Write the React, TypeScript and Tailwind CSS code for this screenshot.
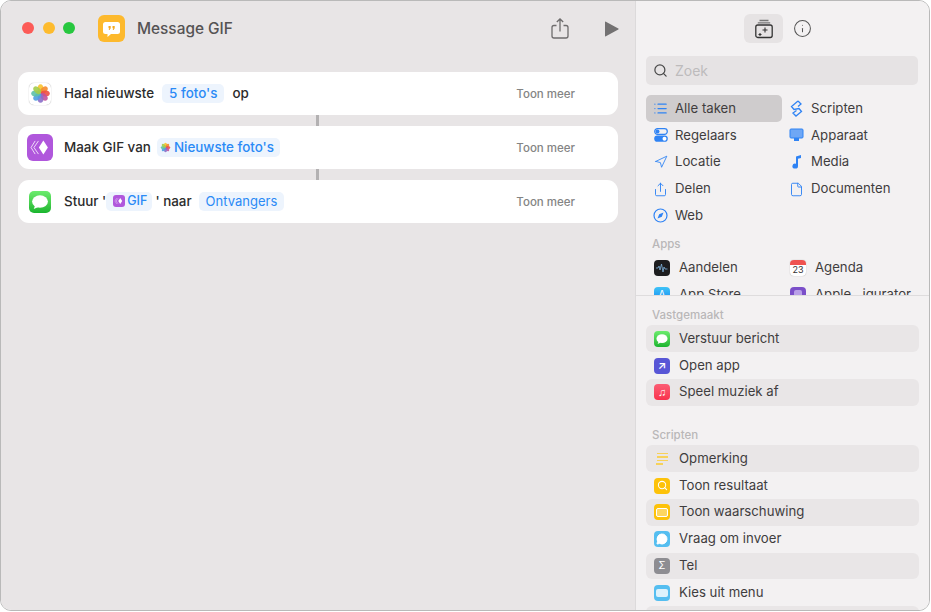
import type { ReactNode } from 'react';
import { File, Info, List, MessageCircle, Navigation, Search, Share } from 'lucide-react';

const petals = ['#f9c32d', '#f58b2c', '#ee4f45', '#c2529c', '#8a6fc9', '#4f9de0', '#5cc0a8', '#a3cc4a'];

function Flower({ size }: { size: number }) {
  return (
    <svg width={size} height={size} viewBox="0 0 24 24">
      {petals.map((color, i) => (
        <ellipse key={color} cx="12" cy="6.6" rx="3.3" ry="5.2" fill={color} opacity="0.9" transform={`rotate(${i * 45} 12 12)`} />
      ))}
    </svg>
  );
}

function GifGlyph({ size }: { size: number }) {
  return (
    <svg width={size} height={size} viewBox="0 0 28 28" fill="none">
      <path d="M17.5 5.5 23 14l-5.5 8.5L12 14z" fill="#fff" />
      <path d="M11.5 6 6 14l5.5 8M7.5 6 2.5 14l5 8" stroke="#fff" strokeWidth="1.2" opacity="0.8" />
    </svg>
  );
}

function BubbleGlyph({ size }: { size: number }) {
  return (
    <svg width={size} height={size} viewBox="0 0 24 24">
      <ellipse cx="12" cy="11.5" rx="9.5" ry="7.5" fill="#fff" />
      <path d="M6 16.5 4.5 20.5 10 18z" fill="#fff" />
    </svg>
  );
}

function Token({ children, className = '' }: { children: ReactNode; className?: string }) {
  return (
    <span className={`flex h-[19px] items-center rounded-[5px] bg-[#edf4fd] font-medium text-[#2a8af6] ${className}`}>
      {children}
    </span>
  );
}

function ActionCard({ icon, children }: { icon: ReactNode; children: ReactNode }) {
  return (
    <div className="flex h-[43px] w-[600px] items-center rounded-[11px] bg-white pr-[43px] pl-[9px]">
      <div className="flex w-[26px] justify-center">{icon}</div>
      <div className="ml-[11px] flex flex-1 items-center text-[13.4px] font-medium text-[#2b2b2b]">{children}</div>
      <span className="pt-[2px] text-[11.5px] font-medium text-[#848484]">Toon meer</span>
    </div>
  );
}

function Connector() {
  return <div className="ml-[298px] h-[11px] w-[3px] bg-[#b3b1b2]" />;
}

function Category({ icon, label, active }: { icon: ReactNode; label: string; active?: boolean }) {
  return (
    <div className={`flex h-[26.8px] items-center rounded-[5px] pl-[6px] text-[13.2px] text-[#3f3d3e] ${active ? 'bg-[#cfcccd]' : ''}`}>
      <span className="flex w-[17px] justify-center text-[#2f83f4]">{icon}</span>
      <span className="ml-[6px]">{label}</span>
    </div>
  );
}

function AppIcon({ className, children }: { className: string; children?: ReactNode }) {
  return <span className={`flex h-4 w-4 items-center justify-center overflow-hidden rounded-[4px] ${className}`}>{children}</span>;
}

function Suggestion({ icon, label, shaded }: { icon: ReactNode; label: string; shaded?: boolean }) {
  return (
    <div className={`flex h-[26.8px] items-center rounded-[6px] pl-[8px] text-[13.2px] text-[#3f3d3e] ${shaded ? 'bg-[#e9e6e7]' : ''}`}>
      {icon}
      <span className="ml-[9px] whitespace-nowrap">{label}</span>
    </div>
  );
}

function SectionLabel({ children, className = '' }: { children: ReactNode; className?: string }) {
  return <div className={`pl-[6px] text-[11.5px] font-medium text-[#b9b7b8] ${className}`}>{children}</div>;
}

export default function App() {
  return (
    <div className="h-[612px] w-[931px] bg-white font-['Inter','Liberation_Sans',sans-serif]">
      <div className="flex h-[611px] w-[930px] overflow-hidden rounded-[11px] border border-[#b9b9b9]">
        <main className="h-full w-[635px] border-r border-[#dcdadb] bg-[#e8e5e6] pl-[17px]">
          <header className="flex h-[71px] items-start">
            <div className="mt-[21px] ml-[4px] flex gap-[8.5px]">
              <span className="h-3 w-3 rounded-full bg-[#fc5b57]" />
              <span className="h-3 w-3 rounded-full bg-[#fdbb2e]" />
              <span className="h-3 w-3 rounded-full bg-[#27c73f]" />
            </div>
            <div className="mt-[14px] ml-[23px] flex h-[27px] w-[27px] items-center justify-center rounded-[6px] bg-[#fdb92d]">
              <svg width="19" height="18" viewBox="0 0 19 18">
                <path d="M3.5 2h12A2.5 2.5 0 0 1 18 4.5v7a2.5 2.5 0 0 1-2.5 2.5H9l-3.5 3v-3h-2A2.5 2.5 0 0 1 1 11.5v-7A2.5 2.5 0 0 1 3.5 2z" fill="#fff" />
                <path d="M6.5 6h2.2v2.2L7.6 10H6.7l.6-1.7h-.8zM10.5 6h2.2v2.2L11.6 10h-.9l.6-1.7h-.8z" fill="#f4a91f" />
              </svg>
            </div>
            <h1 className="mt-[18px] ml-[12px] w-[96px] text-[15.4px] leading-[20px] font-medium whitespace-nowrap text-[#555354]">Message GIF</h1>
            <svg className="mt-[17px] ml-[318px]" width="18" height="21" viewBox="0 0 18 21" fill="none" stroke="#6e6c6d" strokeWidth="1.3">
              <path d="M5.5 7.5H3a2 2 0 0 0-2 2V18a2 2 0 0 0 2 2h12a2 2 0 0 0 2-2V9.5a2 2 0 0 0-2-2h-2.5" />
              <path d="M9 13.5V1M5.8 4 9 1l3.200 3" />
            </svg>
            <svg className="mt-[20px] ml-[35px]" width="15" height="16" viewBox="0 0 15 16" fill="#737172">
              <path d="M1 1.2v13.6a.6.6 0 0 0 .9.5l12.400-6.800a.6.6 0 0 0 0-1L1.900.7a.6.6 0 0 0-.9.5z" />
            </svg>
          </header>
          <ActionCard
            icon={
              <span className="flex h-[22px] w-[22px] items-center justify-center rounded-[5px] bg-white shadow-[0_0_1px_#999]">
                <Flower size={21} />
              </span>
            }
          >
            <span>Haal nieuwste</span>
            <Token className="ml-[8px] px-[7px]">5 foto's</Token>
            <span className="ml-[8px]">op</span>
          </ActionCard>
          <Connector />
          <ActionCard
            icon={
              <span className="flex h-[27px] w-[27px] items-center justify-center rounded-[6px] bg-[#b057dc]">
                <GifGlyph size={23} />
              </span>
            }
          >
            <span>Maak GIF van</span>
            <Token className="ml-[6px] gap-[3px] pr-[6px] pl-[3px]">
              <Flower size={11} />
              Nieuwste foto's
            </Token>
          </ActionCard>
          <Connector />
          <ActionCard
            icon={
              <span className="flex h-[22px] w-[22px] items-center justify-center rounded-[5px] bg-gradient-to-b from-[#6bec6e] to-[#17b52e]">
                <BubbleGlyph size={20} />
              </span>
            }
          >
            <span>Stuur '</span>
            <Token className="gap-[2px] pr-[5px] pl-[7px] text-[12.5px]">
              <span className="flex h-3 w-3 items-center justify-center rounded-[3px] bg-[#b057dc]">
                <GifGlyph size={10} />
              </span>
              GIF
            </Token>
            <span className="ml-[3px]">' naar</span>
            <span className="ml-[7px] flex h-[19px] items-center rounded-[5px] bg-[#edf4fd] px-[7px] text-[13px] font-normal text-[#2a8af6]">Ontvangers</span>
          </ActionCard>
        </main>
        <aside className="h-full flex-1 bg-[#f3f1f2]">
          <div className="flex h-[295px] flex-col overflow-hidden border-b border-[#dedcdd] px-[10px]">
            <div className="mt-[13px] flex h-[29px] shrink-0 items-center pl-[98px]">
              <span className="flex h-[29px] w-[39px] items-center justify-center rounded-[6px] bg-[#e6e3e4]">
                <svg width="20" height="20" viewBox="0 0 20 20" fill="none" stroke="#333" strokeWidth="1.3">
                  <path d="M5.5 1.5h9M3.8 3.8h12.4" stroke="#777" />
                  <rect x="1.8" y="6" width="16.4" height="12.5" rx="2" />
                  <path d="M11 8.5v5M8.5 11h5M6 14v3M4.5 15.5h3" strokeWidth="1.1" />
                </svg>
              </span>
              <Info className="ml-[10px] text-[#555]" size={19} strokeWidth={1.3} />
            </div>
            <div className="mt-[13px] flex h-[29px] w-[272px] shrink-0 items-center rounded-[5px] bg-[#e6e3e4] pl-[7px] text-[14px] text-[#bdbbbc]">
              <Search className="text-[#4a4a4a]" size={15} strokeWidth={2} />
              <span className="ml-[7px]">Zoek</span>
            </div>
            <div className="mt-[10.3px] grid shrink-0 grid-cols-[136px_1fr]">
              <Category active icon={<List size={15} />} label="Alle taken" />
              <Category
                icon={
                  <svg width="15" height="17" viewBox="0 0 15 17" fill="none" stroke="currentColor" strokeWidth="1.3">
                    <path d="M9 1 2.5 6.5 5 9.5l5-1 2.5 3-5.5 4.5-3-3 3.5-2.5M9 1l3 3-3 2.5" />
                  </svg>
                }
                label="Scripten"
              />
              <Category
                icon={
                  <svg width="14" height="14" viewBox="0 0 14 14">
                    <rect x="0.7" y="0.7" width="12.6" height="5.6" rx="2.8" fill="none" stroke="currentColor" strokeWidth="1.2" />
                    <circle cx="3.5" cy="3.5" r="2" fill="currentColor" />
                    <rect x="0.2" y="7.6" width="13.6" height="6.2" rx="3.1" fill="currentColor" />
                    <circle cx="10.5" cy="10.7" r="2" fill="#fff" />
                  </svg>
                }
                label="Regelaars"
              />
              <Category
                icon={
                  <svg width="15" height="14" viewBox="0 0 15 14" fill="currentColor">
                    <rect x="1" y="1" width="13" height="9" rx="1" fill="#6fa7f5" stroke="#2f83f4" />
                    <rect x="5" y="10" width="5" height="3" />
                  </svg>
                }
                label="Apparaat"
              />
              <Category icon={<Navigation size={14} strokeWidth={1.5} />} label="Locatie" />
              <Category
                icon={
                  <svg width="12" height="15" viewBox="0 0 12 15" fill="currentColor">
                    <path d="M5 1.5 10 0v3L7 3.8V11a2.8 2.5 0 1 1-2-2.3z" />
                  </svg>
                }
                label="Media"
              />
              <Category icon={<Share size={15} strokeWidth={1.5} />} label="Delen" />
              <Category icon={<File className="text-[#2f83f4]" size={15} strokeWidth={1.5} />} label="Documenten" />
              <Category
                icon={
                  <svg width="15" height="15" viewBox="0 0 15 15" fill="none" stroke="currentColor" strokeWidth="1.2">
                    <circle cx="7.5" cy="7.5" r="6.5" />
                    <path d="M10.5 4.5 8.8 8.8 4.5 10.5l1.7-4.3z" fill="currentColor" stroke="none" />
                  </svg>
                }
                label="Web"
              />
            </div>
            <SectionLabel className="mt-[8px] shrink-0 leading-[14px]">Apps</SectionLabel>
            <div className="mt-[3.5px] grid shrink-0 grid-cols-[136px_1fr]">
              <Suggestion
                icon={
                  <AppIcon className="bg-[#1d1d1f]">
                    <svg width="14" height="12" viewBox="0 0 14 12" fill="none" stroke="#7fb2dd" strokeWidth="0.8">
                      <path d="M1 6h2l1-2 1 4 1.5-6 1.5 8 1-5 1 2h2.5" />
                    </svg>
                  </AppIcon>
                }
                label="Aandelen"
              />
              <Suggestion
                icon={
                  <AppIcon className="bg-white shadow-[0_0_1px_#999]">
                    <span className="flex h-full w-full flex-col items-center text-[9px] leading-none text-[#333]">
                      <span className="h-[5px] w-full shrink-0 bg-[#ef5350]" />
                      23
                    </span>
                  </AppIcon>
                }
                label="Agenda"
              />
              <Suggestion icon={<AppIcon className="bg-gradient-to-b from-[#3fc3f7] to-[#1680ee] text-[10px] text-white">A</AppIcon>} label="App Store" />
              <Suggestion
                icon={
                  <AppIcon className="bg-[#7b4fc9]">
                    <span className="h-[10px] w-[8px] rounded-[2px] bg-[#b9a0e8]" />
                  </AppIcon>
                }
                label="Apple…igurator"
              />
            </div>
          </div>
          <div className="h-[315px] overflow-hidden px-[10px] pt-[12px]">
            <SectionLabel className="leading-[15px]">Vastgemaakt</SectionLabel>
            <div className="mt-[2.4px]">
              <Suggestion shaded icon={<AppIcon className="bg-gradient-to-b from-[#6bec6e] to-[#17b52e]"><BubbleGlyph size={14} /></AppIcon>} label="Verstuur bericht" />
              <Suggestion icon={<AppIcon className="bg-[#5856d6] text-[11px] font-semibold text-white">↗</AppIcon>} label="Open app" />
              <Suggestion shaded icon={<AppIcon className="bg-gradient-to-b from-[#fb5c74] to-[#f9304c] text-[11px] text-white">♫</AppIcon>} label="Speel muziek af" />
            </div>
            <SectionLabel className="mt-[22.1px] leading-[15px]">Scripten</SectionLabel>
            <div className="mt-[2.5px]">
              <Suggestion
                shaded
                icon={
                  <span className="flex h-4 w-4 flex-col items-center justify-center gap-[2px]">
                    <span className="h-[1.5px] w-[11px] bg-[#f7d25a]" />
                    <span className="h-[1.5px] w-[11px] bg-[#f7d25a]" />
                    <span className="h-[1.5px] w-[11px] bg-[#f7d25a]" />
                    <span className="ml-[2px] h-[1.5px] w-[7px] self-start bg-[#f7d25a]" />
                  </span>
                }
                label="Opmerking"
              />
              <Suggestion icon={<AppIcon className="bg-[#fdc209]"><Search className="text-white" size={11} strokeWidth={2.2} /></AppIcon>} label="Toon resultaat" />
              <Suggestion shaded icon={<AppIcon className="bg-[#fdc209]"><span className="h-[9px] w-[12px] rounded-[2px] border border-white bg-[#fdd65f]" /></AppIcon>} label="Toon waarschuwing" />
              <Suggestion icon={<AppIcon className="bg-[#55bef0]"><MessageCircle className="text-white" fill="#fff" size={12} /></AppIcon>} label="Vraag om invoer" />
              <Suggestion shaded icon={<AppIcon className="bg-[#8e8d92] text-[10px] text-white">Σ</AppIcon>} label="Tel" />
              <Suggestion icon={<AppIcon className="bg-[#55bef0]"><span className="h-[8px] w-[12px] rounded-[2px] bg-white/80" /></AppIcon>} label="Kies uit menu" />
              <div className="h-[26.8px] rounded-[6px] bg-[#e9e6e7]" />
            </div>
          </div>
        </aside>
      </div>
    </div>
  );
}
